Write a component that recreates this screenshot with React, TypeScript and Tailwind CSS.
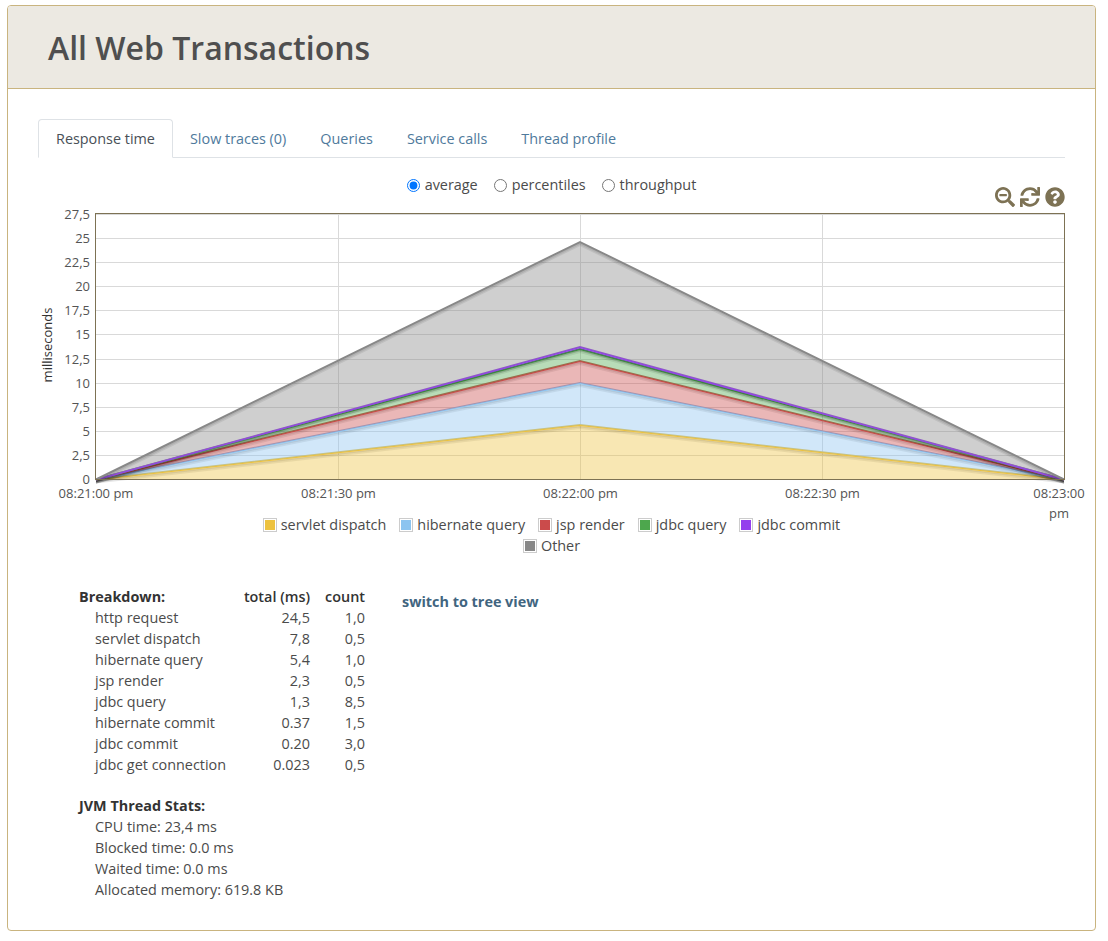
import { FaQuestionCircle, FaSearchMinus, FaSync } from 'react-icons/fa'

const tabs = ['Slow traces (0)', 'Queries', 'Service calls', 'Thread profile']

const modes = [
  { label: 'average', checked: true },
  { label: 'percentiles', checked: false },
  { label: 'throughput', checked: false },
]

// peak y of each stacked series, in page pixels
const series = [
  { name: 'servlet dispatch', color: '#edc240', base: 479.5, peak: 425, swatch: 'bg-[#edc240]' },
  { name: 'hibernate query', color: '#8cc4f0', base: 425, peak: 383, swatch: 'bg-[#8cc4f0]' },
  { name: 'jsp render', color: '#cb4b4b', base: 383, peak: 361, swatch: 'bg-[#cb4b4b]' },
  { name: 'jdbc query', color: '#4da74d', base: 361, peak: 349, swatch: 'bg-[#4da74d]' },
  { name: 'jdbc commit', color: '#9440ed', base: 349, peak: 347, swatch: 'bg-[#9440ed]' },
  { name: 'Other', color: '#888888', base: 347, peak: 242, swatch: 'bg-[#888888]' },
]

const yTicks = ['0', '2,5', '5', '7,5', '10', '12,5', '15', '17,5', '20', '22,5', '25', '27,5']
const xTicks = [
  { x: 96, label: '08:21:00 pm' },
  { x: 338.5, label: '08:21:30 pm' },
  { x: 580.5, label: '08:22:00 pm' },
  { x: 822.5, label: '08:22:30 pm' },
]

const breakdown = [
  ['http request', '24,5', '1,0'],
  ['servlet dispatch', '7,8', '0,5'],
  ['hibernate query', '5,4', '1,0'],
  ['jsp render', '2,3', '0,5'],
  ['jdbc query', '1,3', '8,5'],
  ['hibernate commit', '0.37', '1,5'],
  ['jdbc commit', '0.20', '3,0'],
  ['jdbc get connection', '0.023', '0,5'],
]

const threadStats = ['CPU time: 23,4 ms', 'Blocked time: 0.0 ms', 'Waited time: 0.0 ms', 'Allocated memory: 619.8 KB']

function Chart() {
  const left = 96
  const mid = 580
  const right = 1064
  const bottom = 479.5
  return (
    <svg viewBox="38 200 1027 314" className="block w-[1027px] h-[314px] overflow-visible">
      {yTicks.map((t, i) => {
        const y = Math.round(479 - i * 24.09) + 0.5
        return (
          <g key={t}>
            <line x1={left} x2={right} y1={y} y2={y} stroke="#d9d9d9" />
            <text x={90} y={y + 4} textAnchor="end" fontSize="13" fill="#545454">
              {t}
            </text>
          </g>
        )
      })}
      {[338.5, 580.5, 822.5].map((x) => (
        <line key={x} x1={x} x2={x} y1={214} y2={479} stroke="#d9d9d9" />
      ))}
      {series.map((s) => (
        <g key={s.name}>
          <polyline
            points={`${left},${bottom + 3.25} ${mid},${s.peak + 3.25} ${right},${bottom + 3.25}`}
            fill="none"
            stroke="#000"
            strokeOpacity="0.1"
            strokeWidth="1.5"
          />
          <polyline
            points={`${left},${bottom + 1.75} ${mid},${s.peak + 1.75} ${right},${bottom + 1.75}`}
            fill="none"
            stroke="#000"
            strokeOpacity="0.2"
            strokeWidth="1.5"
          />
          <polygon
            points={`${left},${bottom} ${mid},${s.peak} ${right},${bottom} ${mid},${s.base}`}
            fill={s.color}
            fillOpacity="0.4"
          />
          <polyline
            points={`${left},${bottom} ${mid},${s.peak} ${right},${bottom}`}
            fill="none"
            stroke={s.color}
            strokeWidth="2"
          />
        </g>
      ))}
      <rect x={95.5} y={213.5} width={969} height={266} fill="none" stroke="#7d7254" />
      {xTicks.map((t) => (
        <text key={t.label} x={t.x} y={498} textAnchor="middle" fontSize="13" fill="#545454">
          {t.label}
        </text>
      ))}
      <text x={1059} y={498} textAnchor="middle" fontSize="13" fill="#545454">
        08:23:00
      </text>
      <text x={1059} y={518} textAnchor="middle" fontSize="13" fill="#545454">
        pm
      </text>
      <text x={0} y={0} transform="translate(52 345) rotate(-90)" textAnchor="middle" fontSize="13" fill="#333333">
        milliseconds
      </text>
    </svg>
  )
}

export default function App() {
  return (
    <div className="min-h-[941px] bg-white pt-[5px] px-[7px] font-['Open_Sans',sans-serif] text-[14.4px] text-[#4b4b4b]">
      <div className="w-[1089px] h-[926px] border border-[#c9b47f] rounded-[4px] overflow-hidden">
        <div className="h-[83px] bg-[#ece9e2] border-b border-[#c9b47f] pl-[40px] pt-[1px] flex items-center">
          <h1 className="text-[32px] font-semibold text-[#4f4f4f] leading-none">All Web Transactions</h1>
        </div>

        <div className="pt-[30px] pl-[30px] pr-[30px]">
          <div className="flex w-[1027px] h-[39px] border-b border-[#dee2e6]">
            <div className="h-[39px] px-[17px] flex items-center bg-white border border-[#dee2e6] border-b-white rounded-t-[4px] text-[#495057]">
              Response time
            </div>
            {tabs.map((tab) => (
              <div key={tab} className="px-[17px] pt-[1px] flex items-center text-[#4f7a9c]">
                {tab}
              </div>
            ))}
          </div>

          <div className="relative flex justify-center gap-4 w-[1027px] h-[42px] pt-4 leading-[22px]">
            {modes.map((m) => (
              <label key={m.label} className="flex items-center gap-[5px] h-[22px]">
                <input type="radio" name="mode" defaultChecked={m.checked} className="w-[13px] h-[13px] m-0" />
                {m.label}
              </label>
            ))}
            <div className="absolute right-0 top-[29px] flex items-center gap-[5px] text-[20px] text-[#7d7254]">
              <FaSearchMinus />
              <FaSync />
              <FaQuestionCircle />
            </div>
          </div>

          <Chart />

          <div className="w-[1027px] flex justify-center">
            <div className="w-[600px] flex flex-wrap justify-center gap-x-[13px] leading-[21px]">
              {series.map((s) => (
                <div key={s.name} className="flex items-center gap-[4px] h-[21px]">
                  <span className="w-[14px] h-[14px] border border-[#cccccc] p-[1px] flex">
                    <span className={`flex-1 ${s.swatch}`} />
                  </span>
                  {s.name}
                </div>
              ))}
            </div>
          </div>

          <div className="flex mt-[30px] pl-[41px]">
            <div className="w-[323px]">
              <table className="w-[286px] leading-[21px]">
                <thead>
                  <tr className="text-[#333333]">
                    <th className="text-left font-bold">Breakdown:</th>
                    <th className="text-right font-semibold">total (ms)</th>
                    <th className="text-right font-semibold">count</th>
                  </tr>
                </thead>
                <tbody>
                  {breakdown.map((row) => (
                    <tr key={row[0]}>
                      <td className="pl-[16px] w-[164px]">{row[0]}</td>
                      <td className="text-right w-[67px]">{row[1]}</td>
                      <td className="text-right">{row[2]}</td>
                    </tr>
                  ))}
                </tbody>
              </table>

              <div className="mt-[20px] leading-[21px]">
                <div className="font-bold text-[#333333]">JVM Thread Stats:</div>
                {threadStats.map((s) => (
                  <div key={s} className="pl-[16px]">
                    {s}
                  </div>
                ))}
              </div>
            </div>
            <div className="pt-[5px] font-bold text-[#41657f] leading-[21px]">switch to tree view</div>
          </div>
        </div>
      </div>
    </div>
  )
}
